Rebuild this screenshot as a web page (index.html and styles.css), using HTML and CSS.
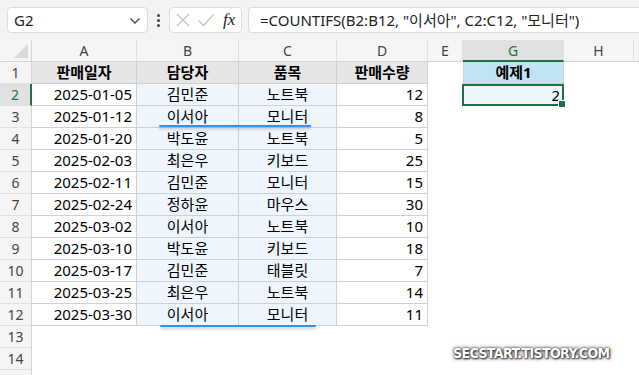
FILE: index.html
```html
<!DOCTYPE html>
<html>
<head>
  <meta charset="UTF-8">
  <title>COUNTIFS 예제</title>
  <link rel="stylesheet" href="styles.css">
</head>
<body>
  <!-- 수식 입력줄 -->
  <div class="formula-bar">
    <div class="name-box">
      <span>G2</span>
      <svg class="chev" width="12" height="8" viewBox="0 0 12 8"><polyline points="1.5,1.5 6,6 10.5,1.5" fill="none" stroke="#444" stroke-width="1.3"/></svg>
    </div>
    <div class="dots"><i></i><i></i><i></i></div>
    <div class="fx-box">
      <svg width="16" height="16" viewBox="0 0 16 16"><path d="M2 2 L14 14 M14 2 L2 14" stroke="#c4c4c4" stroke-width="1.3"/></svg>
      <svg width="18" height="16" viewBox="0 0 18 16"><polyline points="1.5,8.5 6.5,13.5 16.5,2.5" fill="none" stroke="#c4c4c4" stroke-width="1.3"/></svg>
      <span class="fx">fx</span>
    </div>
    <div class="formula">=COUNTIFS(B2:B12, "이서아", C2:C12, "모니터")</div>
  </div>

  <div class="sheet-wrap">
    <div class="sheet">
      <div class="corner"></div>
      <div class="ch">A</div><div class="ch">B</div><div class="ch">C</div><div class="ch">D</div><div class="ch">E</div><div class="ch sel">G</div><div class="ch">H</div><div class="ch last"></div>

      <div class="rh">1</div>
      <div class="c hd">판매일자</div><div class="c hd">담당자</div><div class="c hd">품목</div><div class="c hd">판매수량</div>
      <div class="e"></div><div class="c ex">예제1</div><div class="e"></div><div class="e"></div>

      <div class="rh sel">2</div>
      <div class="c r">2025-01-05</div><div class="c bl">김민준</div><div class="c bl">노트북</div><div class="c r">12</div>
      <div class="e"></div><div class="c r active">2<span class="handle"></span></div><div class="e"></div><div class="e"></div>

      <div class="rh">3</div>
      <div class="c r">2025-01-12</div><div class="c bl">이서아</div><div class="c bl">모니터</div><div class="c r">8</div>
      <div class="e"></div><div class="e"></div><div class="e"></div><div class="e"></div>

      <div class="rh">4</div>
      <div class="c r">2025-01-20</div><div class="c bl">박도윤</div><div class="c bl">노트북</div><div class="c r">5</div>
      <div class="e"></div><div class="e"></div><div class="e"></div><div class="e"></div>

      <div class="rh">5</div>
      <div class="c r">2025-02-03</div><div class="c bl">최은우</div><div class="c bl">키보드</div><div class="c r">25</div>
      <div class="e"></div><div class="e"></div><div class="e"></div><div class="e"></div>

      <div class="rh">6</div>
      <div class="c r">2025-02-11</div><div class="c bl">김민준</div><div class="c bl">모니터</div><div class="c r">15</div>
      <div class="e"></div><div class="e"></div><div class="e"></div><div class="e"></div>

      <div class="rh">7</div>
      <div class="c r">2025-02-24</div><div class="c bl">정하윤</div><div class="c bl">마우스</div><div class="c r">30</div>
      <div class="e"></div><div class="e"></div><div class="e"></div><div class="e"></div>

      <div class="rh">8</div>
      <div class="c r">2025-03-02</div><div class="c bl">이서아</div><div class="c bl">노트북</div><div class="c r">10</div>
      <div class="e"></div><div class="e"></div><div class="e"></div><div class="e"></div>

      <div class="rh">9</div>
      <div class="c r">2025-03-10</div><div class="c bl">박도윤</div><div class="c bl">키보드</div><div class="c r">18</div>
      <div class="e"></div><div class="e"></div><div class="e"></div><div class="e"></div>

      <div class="rh">10</div>
      <div class="c r">2025-03-17</div><div class="c bl">김민준</div><div class="c bl">태블릿</div><div class="c r">7</div>
      <div class="e"></div><div class="e"></div><div class="e"></div><div class="e"></div>

      <div class="rh">11</div>
      <div class="c r">2025-03-25</div><div class="c bl">최은우</div><div class="c bl">노트북</div><div class="c r">14</div>
      <div class="e"></div><div class="e"></div><div class="e"></div><div class="e"></div>

      <div class="rh">12</div>
      <div class="c r">2025-03-30</div><div class="c bl">이서아</div><div class="c bl">모니터</div><div class="c r">11</div>
      <div class="e"></div><div class="e"></div><div class="e"></div><div class="e"></div>

      <div class="rh">13</div>
      <div class="e"></div><div class="e"></div><div class="e"></div><div class="e"></div><div class="e"></div><div class="e"></div><div class="e"></div><div class="e"></div>

      <div class="rh">14</div>
      <div class="e"></div><div class="e"></div><div class="e"></div><div class="e"></div><div class="e"></div><div class="e"></div><div class="e"></div><div class="e"></div>

      <div class="rh"></div>
      <div class="e"></div><div class="e"></div><div class="e"></div><div class="e"></div><div class="e"></div><div class="e"></div><div class="e"></div><div class="e"></div>
    </div>

    <!-- 조건에 맞는 행 강조 밑줄 -->
    <div class="mark mark-1"></div>
    <div class="mark mark-2"></div>

    <div class="watermark">SECSTART.TISTORY.COM</div>
  </div>
</body>
</html>
```

FILE: styles.css
```css
body {
  margin: 0;
  background: #fff;
  font-family: "Noto Sans", "Noto Sans CJK KR", sans-serif;
  color: #000;
  overflow: hidden;
}

/* 수식 입력줄 */
.formula-bar {
  height: 40px;
  background: #f3f3f3;
  display: flex;
  align-items: flex-start;
  padding: 7px 0 0 7px;
  box-sizing: border-box;
}

.name-box {
  width: 141px;
  height: 26px;
  background: #fff;
  border: 1px solid #dcdcdc;
  border-radius: 4px;
  box-sizing: border-box;
  display: flex;
  align-items: center;
  justify-content: space-between;
  padding: 0 6px;
  font-size: 15px;
  color: #222;
}

.chev {
  margin-top: 1px;
}

.dots {
  width: 21px;
  height: 26px;
  display: flex;
  flex-direction: column;
  align-items: center;
  justify-content: center;
  gap: 2px;
}

.dots i {
  width: 3px;
  height: 3px;
  background: #444;
  border-radius: 50%;
}

.fx-box {
  width: 73px;
  height: 26px;
  background: #fff;
  border: 1px solid #dcdcdc;
  border-radius: 4px;
  box-sizing: border-box;
  display: flex;
  align-items: center;
  gap: 6px;
  padding: 0 0 0 5px;
}

.fx {
  font-family: "Liberation Serif", serif;
  font-style: italic;
  font-size: 17px;
  color: #222;
  margin-left: 2px;
}

.formula {
  flex: 1;
  height: 26px;
  margin-left: 6px;
  background: #fff;
  border: 1px solid #dcdcdc;
  border-right: none;
  border-radius: 4px 0 0 4px;
  box-sizing: border-box;
  padding: 0 0 0 11px;
  font-size: 15px;
  line-height: 24px;
  color: #222;
  white-space: nowrap;
}

/* 시트 */
.sheet-wrap {
  position: relative;
}

.sheet {
  display: grid;
  grid-template-columns: 32px 105px 102px 98px 91px 35px 101px 70px 1fr;
  grid-auto-rows: 22px;
  font-size: 15px;
}

.sheet > div {
  box-sizing: border-box;
  line-height: 21px;
  white-space: nowrap;
  overflow: hidden;
}

.corner {
  background: #f5f5f5;
  border-right: 1px solid #d4d4d4;
  border-bottom: 1px solid #d4d4d4;
  position: relative;
}

.corner::after {
  content: "";
  position: absolute;
  right: 3px;
  bottom: 3px;
  border-left: 14px solid transparent;
  border-bottom: 14px solid #dadada;
}

.ch {
  background: #f5f5f5;
  border-right: 1px solid #e0e0e0;
  border-bottom: 1px solid #d4d4d4;
  text-align: center;
  font-size: 14px;
  color: #444;
}

.ch.sel {
  background: #e1e1e1;
  border-bottom: 2px solid #1e7145;
  color: #1e7145;
}

.ch.last {
  border-right: none;
}

.rh {
  background: #f5f5f5;
  border-right: 1px solid #d4d4d4;
  border-bottom: 1px solid #e0e0e0;
  text-align: center;
  font-size: 14px;
  color: #444;
}

.rh.sel {
  background: #e1e1e1;
  border-right: 2px solid #1e7145;
  color: #1e7145;
}

.c {
  border-right: 1px solid #d0d0d0;
  border-bottom: 1px solid #d0d0d0;
  text-align: center;
  padding: 0 4px;
}

.c.r {
  text-align: right;
}

.c.hd {
  background: #e7e6e6;
  font-weight: 700;
}

.c.bl {
  background: #eef5fc;
}

.c.ex {
  background: #c1e4f5;
  font-weight: 700;
  border-left: 1px solid #d0d0d0;
}

.c.active {
  background: #eef5fc;
  border: 2px solid #1e7145;
  margin-left: -1px;
  position: relative;
  overflow: visible;
  line-height: 18px;
  padding-right: 2px;
}

.handle {
  position: absolute;
  right: -4px;
  bottom: -4px;
  width: 6px;
  height: 6px;
  background: #1e7145;
  border: 1px solid #fff;
}

/* 강조 밑줄 */
.mark {
  position: absolute;
  height: 2px;
  background: #3b8ee9;
  border-radius: 1px;
  box-shadow: 0 2px 3px rgba(0, 0, 0, 0.25);
}

.mark-1 {
  left: 159px;
  top: 85px;
  width: 152px;
}

.mark-2 {
  left: 160px;
  top: 285px;
  width: 156px;
}

.watermark {
  position: absolute;
  left: 453px;
  top: 305px;
  font-family: "DejaVu Sans Condensed", "DejaVu Sans", sans-serif;
  font-weight: 700;
  font-size: 14px;
  color: #fff;
  letter-spacing: -0.6px;
  text-shadow: 0 0 2px #333, 1px 1px 2px #333, 0 0 4px #555;
}
```
